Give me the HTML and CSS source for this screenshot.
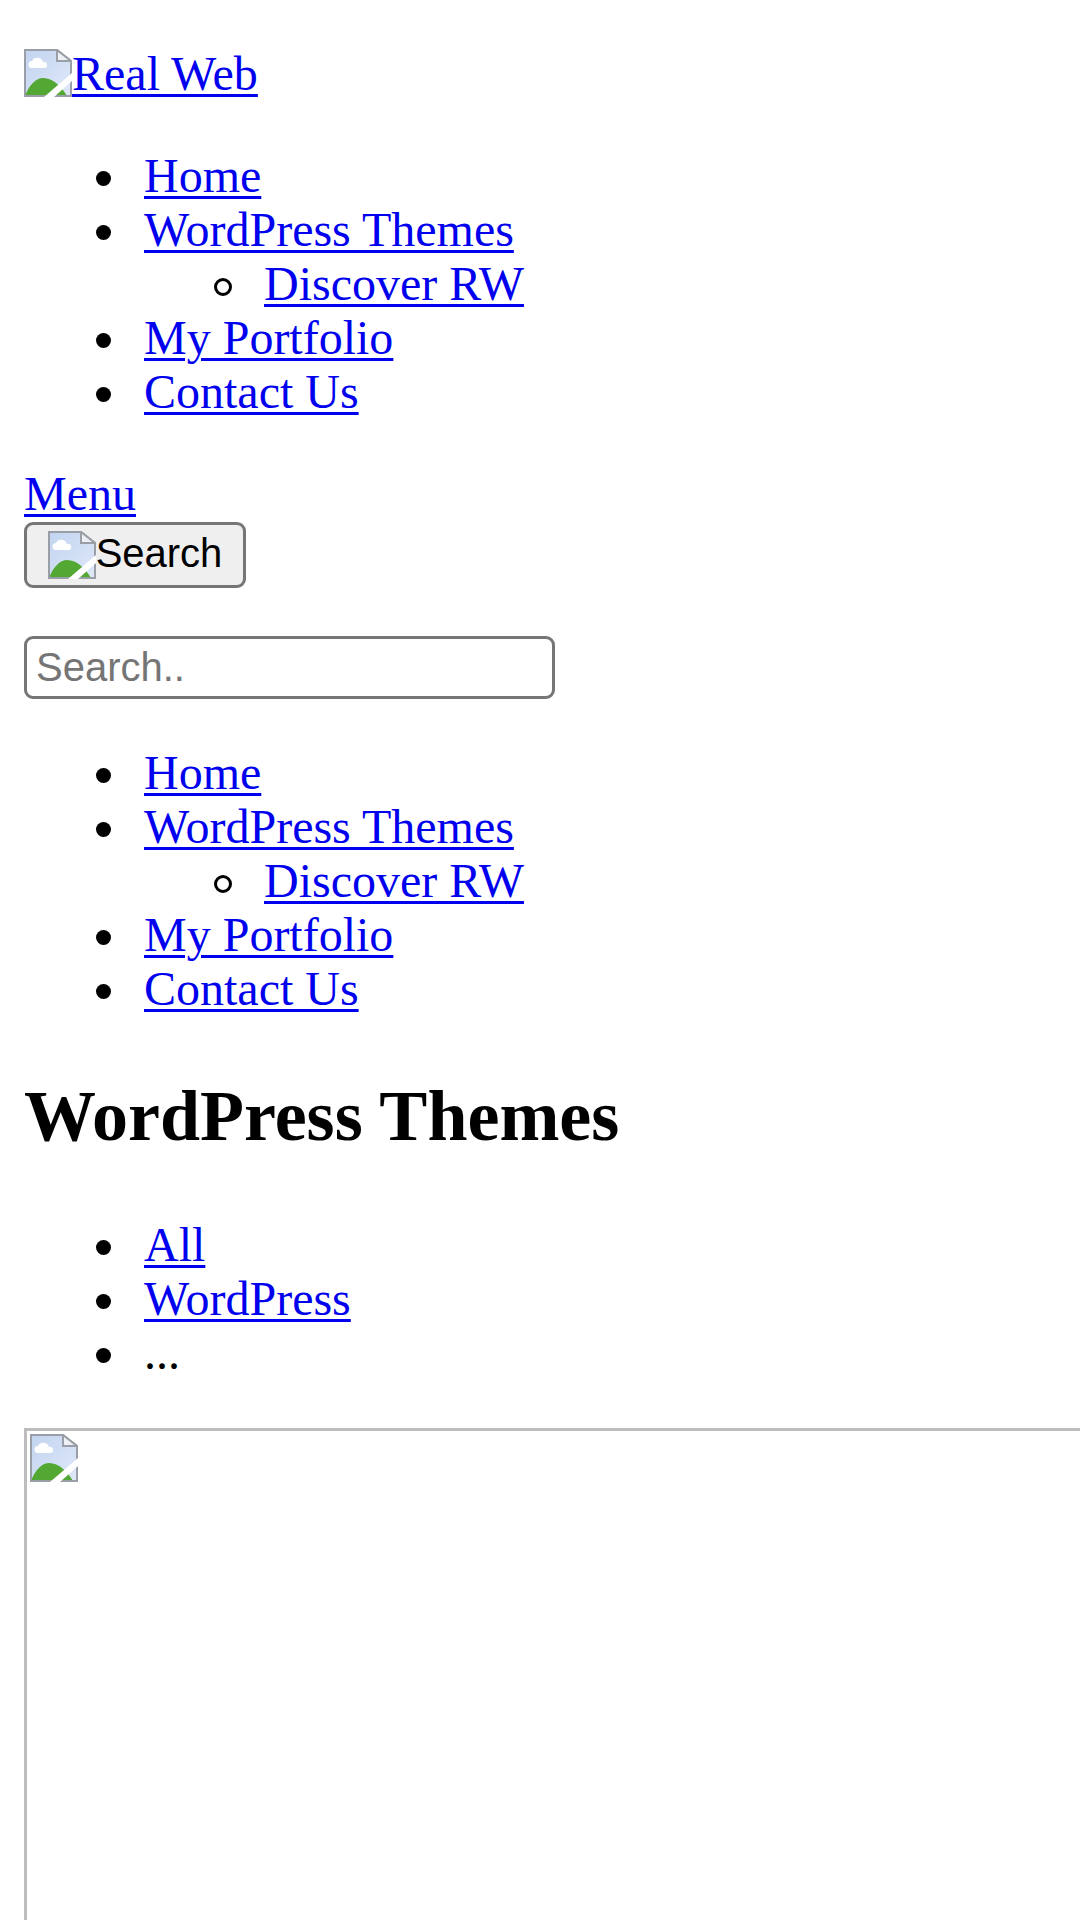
FILE: index.html
```html
<!DOCTYPE html>
<html lang="en">
    <head>
        <meta charset="UTF-8">
        <title>WordPress Themes - Real Web</title>
        <link rel="stylesheet" href="styles.css">
    </head>
    <body>
        <svg class="sprite" width="0" height="0">
            <linearGradient id="sky" x1="0" y1="0" x2="1" y2="1">
                <stop offset="0" stop-color="#c2d4f0"/>
                <stop offset="1" stop-color="#dfe8f8"/>
            </linearGradient>
            <symbol id="broken" viewBox="0 0 48 48">
                <path d="M1 1H33L47 12V47H1Z" fill="url(#sky)"/>
                <path d="M8 19a3.5 3.5 0 0 1 0-7a6 6 0 0 1 11 1a3 3 0 0 1 2 6Z" fill="#fff"/>
                <path d="M1 47C5 36 12 29 19 29C29 29 38 38 43 47Z" fill="#52a832"/>
                <path d="M1 1H33L47 12V47H1Z" fill="none" stroke="#9a9ea6" stroke-width="2"/>
                <path d="M33 1V12H47Z" fill="#eef0f4" stroke="#9a9ea6" stroke-width="2"/>
                <path d="M20 48H30L48 32V24Z" fill="#fff"/>
            </symbol>
        </svg>
        <div class="logo">
            <a href="#"><svg class="broken logo-icon"><use href="#broken"/></svg>Real Web</a>
        </div>
        <ul>
            <li><a href="#">Home</a></li>
            <li><a href="#">WordPress Themes</a>
                <ul>
                    <li><a href="#">Discover RW</a></li>
                </ul>
            </li>
            <li><a href="#">My Portfolio</a></li>
            <li><a href="#">Contact Us</a></li>
        </ul>
        <div><a href="#">Menu</a></div>
        <button class="search-btn" type="button"><svg class="broken btn-icon"><use href="#broken"/></svg>Search</button>
        <form class="search-form">
            <input class="search-input" type="text" placeholder="Search..">
        </form>
        <ul class="mobile-nav">
            <li><a href="#">Home</a></li>
            <li><a href="#">WordPress Themes</a>
                <ul>
                    <li><a href="#">Discover RW</a></li>
                </ul>
            </li>
            <li><a href="#">My Portfolio</a></li>
            <li><a href="#">Contact Us</a></li>
        </ul>
        <h2>WordPress Themes</h2>
        <ul>
            <li><a href="#">All</a></li>
            <li><a href="#">WordPress</a></li>
            <li>...</li>
        </ul>
        <div class="thumb">
            <svg class="broken"><use href="#broken"/></svg>
        </div>
    </body>
</html>
```

FILE: styles.css
```css
body {
    margin: 24px 0 0 24px;
    font-family: "Liberation Serif", serif;
    font-size: 48px;
    line-height: 54px;
    color: #000;
}
a {
    color: #0000ee;
    text-decoration-thickness: 3px;
    text-underline-offset: 4px;
}
ul {
    margin: 48px 0;
    padding-left: 120px;
    list-style: none;
}
ul ul {
    margin: 0;
}
.mobile-nav {
    margin-top: 47px;
}
li {
    position: relative;
}
li::before {
    content: "";
    position: absolute;
    left: -48px;
    top: 22px;
    width: 15px;
    height: 15px;
    border-radius: 50%;
    background: #000;
}
li li::before {
    left: -50px;
    top: 21px;
    box-sizing: border-box;
    width: 18px;
    height: 18px;
    border: 3px solid #000;
    background: none;
}
.sprite {
    display: block;
}
.broken {
    width: 48px;
    height: 48px;
    display: block;
}
.logo {
    margin-top: 23px;
    height: 54px;
}
.logo-icon,
.btn-icon {
    display: inline-block;
}
.logo-icon {
    vertical-align: -7px;
}
.btn-icon {
    vertical-align: -12px;
}
.search-btn {
    display: block;
    width: 222px;
    height: 66px;
    padding: 0;
    margin-top: 1px;
    border: 3px solid #767676;
    border-radius: 9px;
    background: #efefef;
    font-family: "Liberation Sans", sans-serif;
    font-size: 40px;
    color: #000;
}
.search-form {
    margin-top: 48px;
}
.search-input {
    display: block;
    box-sizing: border-box;
    width: 531px;
    height: 63px;
    padding: 0 9px;
    border: 3px solid #767676;
    border-radius: 9px;
    font-family: "Liberation Sans", sans-serif;
    font-size: 40px;
}
.search-input::placeholder {
    color: #757575;
}
h2 {
    margin: 60px 0 61px;
    font-size: 72px;
    line-height: 81px;
}
.thumb {
    box-sizing: border-box;
    height: 492px;
    padding: 3px;
    border: solid #bdbdbd;
    border-width: 3px 0 0 3px;
}
```
